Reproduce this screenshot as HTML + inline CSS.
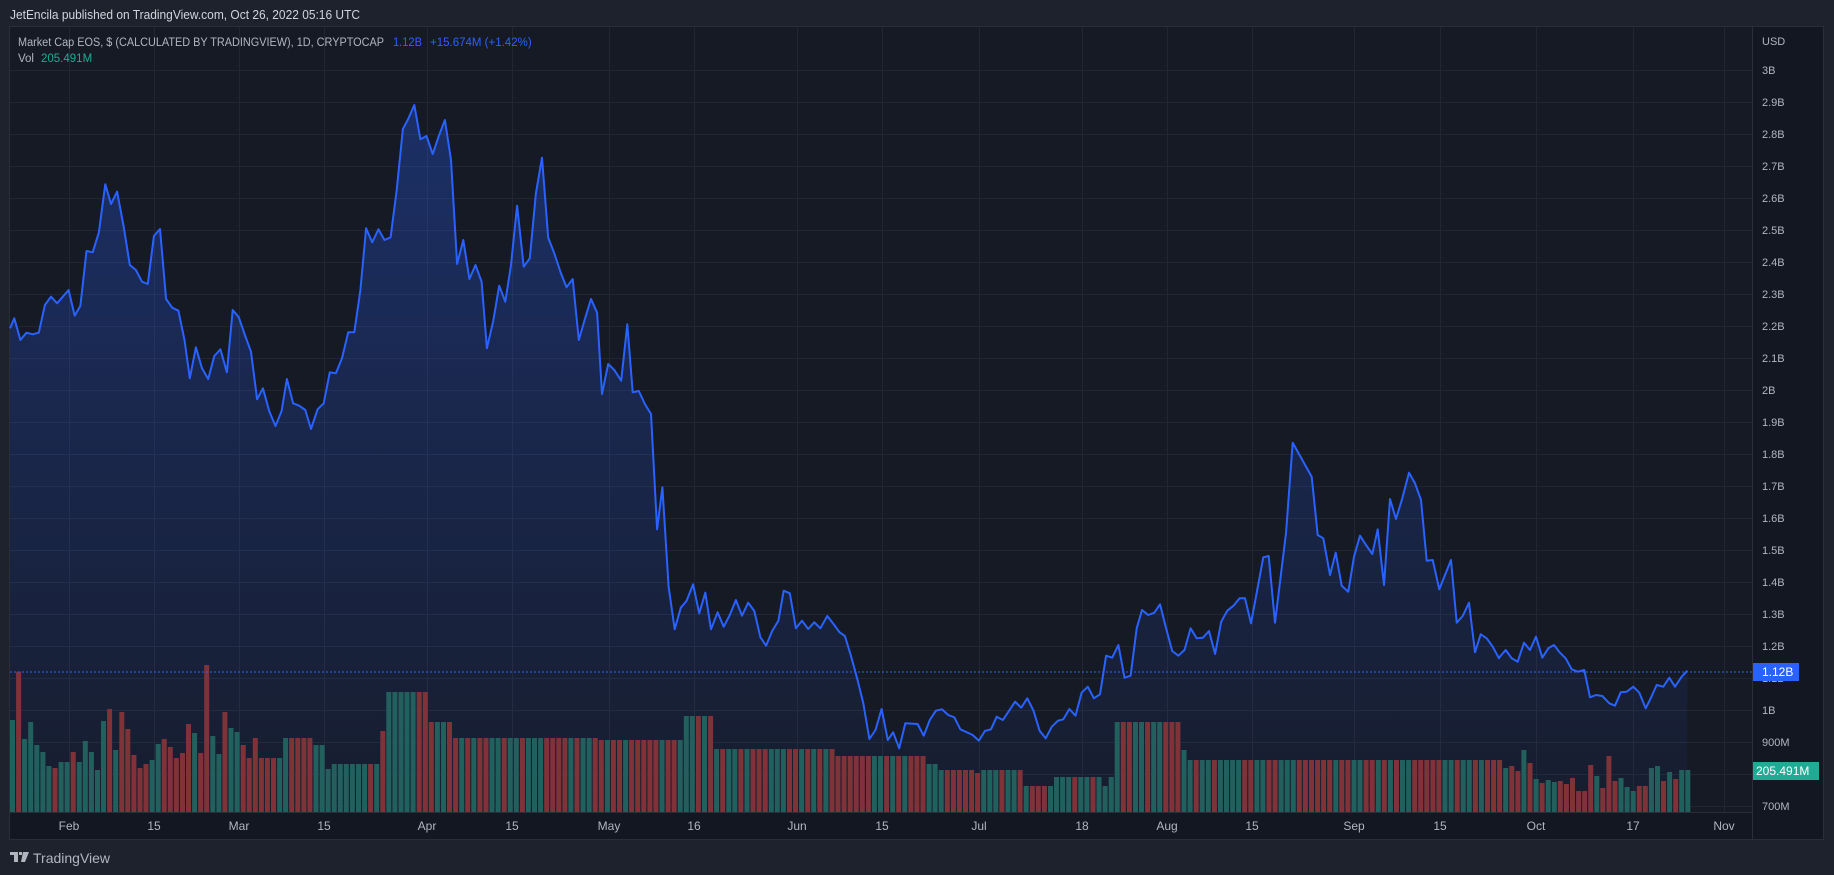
<!DOCTYPE html>
<html><head><meta charset="utf-8">
<style>
html,body{margin:0;padding:0;background:#1e222d;width:1834px;height:875px;overflow:hidden;font-family:"Liberation Sans",sans-serif;}
svg{position:absolute;left:0;top:0}
</style></head><body>
<svg id="s" width="1834" height="875" xmlns="http://www.w3.org/2000/svg"></svg>
<script>
var s=document.getElementById('s');var h='';
function R(x,y,w,hh,c){h+='<rect x="'+x+'" y="'+y+'" width="'+w+'" height="'+hh+'" fill="'+c+'"/>';}
function T(x,y,t,c,sz,anc,tl){h+='<text x="'+x+'" y="'+y+'" fill="'+c+'" font-size="'+sz+'" font-family="Liberation Sans, sans-serif"'+(anc?' text-anchor="'+anc+'"':'')+(tl?' textLength="'+tl+'" lengthAdjust="spacingAndGlyphs"':'')+'>'+t+'</text>';}
R(9,26,1815,814,'#2a2e39');
R(10,27,1742,785,'#161a25');
R(1753,27,70,812,'#131722');
R(10,813,1742,26,'#131722');
for(var v=0;v<=23;v++){var y=70+v*32;if(y<812)R(10,y,1742,1,'#232632');}
var xs=[[69,'Feb'],[154,'15'],[239,'Mar'],[324,'15'],[427,'Apr'],[512,'15'],[609,'May'],[694,'16'],[797,'Jun'],[882,'15'],[979,'Jul'],[1082,'18'],[1167,'Aug'],[1252,'15'],[1354,'Sep'],[1440,'15'],[1536,'Oct'],[1633,'17'],[1724,'Nov']];
xs.forEach(function(a){R(a[0],27,1,785,'#232632');});
var P=[];
var z4=[[25,745],[35,715],[50,780],[65,758],[80,763],[95,758],[110,675],[125,650],[140,670],[168,630],[183,707],[197,677],[212,513],[227,517],[242,458],[258,313],[272,372],[287,335],[303,440],[318,555],[333,570],[348,605],[362,612],[377,468],[392,447],[407,657],[422,683],[437,692],[452,780],[465,895],[480,802],[495,865],[510,897],[525,828],[540,808],[556,877],[570,690],[585,712],[600,765],[615,815],[630,958],[644,925],[660,995],[675,1038],[690,993],[703,897],[718,970],[733,977],[748,990],[762,1047],[778,988],[793,970],[808,877],[823,880],[838,835],[853,757],[868,757],[883,630],[897,445],[912,487],[927,448],[942,480],[957,472],[972,330],[987,147],[1000,117],[1015,75],[1030,178],[1045,168],[1060,222],[1075,168],[1090,120],[1105,240],[1120,552],[1135,480],[1150,597],[1165,555],[1180,605],[1193,805],[1208,725],[1223,617],[1238,665],[1252,555],[1267,377],[1283,560],[1298,535],[1313,340],[1328,233],[1343,473],[1358,520],[1373,575],[1388,622],[1403,597],[1418,780],[1433,717],[1448,657],[1463,698],[1475,942],[1490,852],[1505,870],[1522,902],[1537,733],[1550,937],[1565,933]];
z4.forEach(function(p){P.push([p[0]/2.45,80+p[1]/3]);});
var z5=[[110,312],[125,342],[140,688],[153,562],[168,860],[183,988],[198,923],[212,903],[228,853],[243,940],[258,878],[272,988],[288,937],[303,980],[318,945],[333,900],[348,947],[363,908],[378,933],[393,1012],[407,1037],[422,993],[437,962],[450,872],[465,880],[480,985],[495,962],[510,987],[525,967],[540,985],[557,948],[572,972],[587,997],[600,1008],[615,1068],[630,1135],[645,1210],[660,1317],[675,1290],[690,1227],[705,1320],[718,1297],[733,1345],[748,1270],[778,1272],[793,1307],[808,1260],[823,1232],[838,1228],[853,1245],[868,1252],[883,1288],[913,1305],[928,1322],[943,1293],[958,1288],[972,1250],[987,1260],[1017,1205],[1032,1223],[1047,1195],[1062,1232],[1077,1292],[1092,1315],[1107,1280],[1122,1262],[1135,1258],[1150,1227],[1165,1247],[1180,1178],[1195,1160],[1210,1195],[1225,1183],[1240,1067],[1255,1073],[1270,1035],[1285,1133],[1300,1127],[1315,985],[1328,930],[1343,945],[1358,938],[1372,913],[1387,985],[1402,1053],[1417,1067],[1432,1050],[1447,985],[1462,1015],[1477,1013],[1492,993],[1507,1062],[1522,965],[1537,932],[1552,917],[1567,895]];
z5.forEach(function(p){P.push([600+p[0]/2.45,300+p[1]/3]);});
var z6=[[735,535],[753,610],[790,412],[806,408],[825,608],[858,340],[878,68],[935,170],[953,345],[970,355],[990,465],[1007,398],[1025,497],[1045,515],[1062,410],[1080,347],[1098,375],[1117,402],[1133,328],[1152,495],[1170,237],[1188,297],[1207,235],[1227,158],[1245,190],[1263,240],[1280,422],[1298,420],[1318,508],[1353,420],[1370,608],[1388,588],[1407,548],[1425,697],[1442,643],[1460,655],[1478,680],[1497,715]];
z6.forEach(function(p){P.push([1000+p[0]/3,420+p[1]/3]);});
var z2=[[297,353],[317,330],[335,355],[353,365],[372,308],[390,330],[408,290],[427,353],[445,325],[462,315],[480,338],[497,355],[515,388],[533,395],[553,390],[570,472],[588,465],[607,468],[628,490],[645,497],[662,457],[680,455],[700,440],[718,458],[737,505],[752,475],[770,435],[790,440],[808,413],[825,440],[845,410],[862,392]];
z2.forEach(function(p){P.push([1400+p[0]/3,540+p[1]/3]);});
P[0][0]=10;
function priceAt(x){for(var i=1;i<P.length;i++){if(P[i][0]>=x){var a=P[i-1],b=P[i];var t=(x-a[0])/((b[0]-a[0])||1);return a[1]+(b[1]-a[1])*t;}}return P[P.length-1][1];}
h+='<defs><linearGradient id="g" x1="0" y1="0" x2="0" y2="1"><stop offset="0" stop-color="#2962ff" stop-opacity="0.3"/><stop offset="1" stop-color="#2962ff" stop-opacity="0.04"/></linearGradient></defs>';
var pts=P.map(function(p){return p[0].toFixed(1)+','+p[1].toFixed(1);}).join(' ');
h+='<polygon points="10,812 '+pts+' 1687,812" fill="url(#g)"/>';
var z3=[420,275,477,426,495,516,558,564,546,546,516,546,483,516,570,423,387,510,396,447,525,564,552,540,492,477,501,534,519,432,459,519,255,468,522,396,444,456,495,534,474,534,534,534,534,474,474,474,474,474,495,495,567,552,552,552,552,552,552,552,552,453,336,336,336];
function topAt(x){
  var i=Math.round((x-12)/6.07);
  if(i<z3.length)return 580+z3[i]/3;
  var T2=[[430,692],[450,722],[600,738],[684,740],[713,716],[836,749],[927,756],[939,764],[975,770],[981,773],[1024,770],[1055,786],[1103,777],[1109,786],[1115,777],[1180,722],[1187,750],[1387,760],[1448,760],[1448,763],[1500,760]];
  for(var k=0;k<T2.length;k++)if(x<T2[k][0])return T2[k][1];
  var z2v=[[143,763],[307,760],[327,768],[345,766],[363,771],[381,750],[400,763],[418,779],[436,783],[454,780],[472,782],[490,781],[508,784],[526,778],[544,791],[562,791],[580,765],[598,776],[616,788],[634,756],[652,781],[670,778],[688,787],[706,791],[724,786],[742,786],[760,768],[778,766],[796,781],[814,772],[832,779],[850,770],[870,770]];
  var zx=(x-1400)*3;for(var k=0;k<z2v.length;k++)if(zx<z2v[k][0])return z2v[k][1];return 770;}
for(var x=10;x<1688;x+=6.07){
  var t=topAt(x+2.5);var up=priceAt(x+3)<=priceAt(x-3);
  R(x.toFixed(1),t.toFixed(1),5,(812-t).toFixed(1),up?'#22605d':'#7f3339');
}
h+='<polyline points="'+pts+'" fill="none" stroke="#2962ff" stroke-width="2" stroke-linejoin="round"/>';
h+='<line x1="10" y1="672" x2="1752" y2="672" stroke="#2962ff" stroke-width="1" stroke-dasharray="2,2"/>';
T(1762,45,'USD','#b2b5be',11);
var lab=['3B','2.9B','2.8B','2.7B','2.6B','2.5B','2.4B','2.3B','2.2B','2.1B','2B','1.9B','1.8B','1.7B','1.6B','1.5B','1.4B','1.3B','1.2B','1.1B','1B','900M','800M','700M'];
lab.forEach(function(l,i){var y=70+i*32;if(l=='800M')return;T(1762,y+4,l,'#b2b5be',11);});
R(1753,663,46,18,'#2962ff');T(1762,676,'1.12B','#ffffff',12);
R(1753,762,66,18,'#22ab94');T(1756,775,'205.491M','#ffffff',12);
xs.forEach(function(a){T(a[0],830,a[1],'#b2b5be',12,'middle');});
T(10,19,'JetEncila published on TradingView.com, Oct 26, 2022 05:16 UTC','#d1d4dc',13,null,350);
T(18,46,'Market Cap EOS, $ (CALCULATED BY TRADINGVIEW), 1D, CRYPTOCAP','#b2b5be',11.5,null,366);
T(393,46,'1.12B','#2962ff',11.5,null,29);T(430,46,'+15.674M (+1.42%)','#2962ff',11.5);
T(18,62,'Vol','#b2b5be',11.5);T(41,62,'205.491M','#22ab94',11.5);
h+='<path d="M10 852h8v10h-4v-7h-4z M19 852h3v3h-3z M23 852h6l-4 10h-4z" fill="#b2b5be"/>';
T(33,863,'TradingView','#b2b5be',14);
s.innerHTML=h;
</script>
</body></html>
